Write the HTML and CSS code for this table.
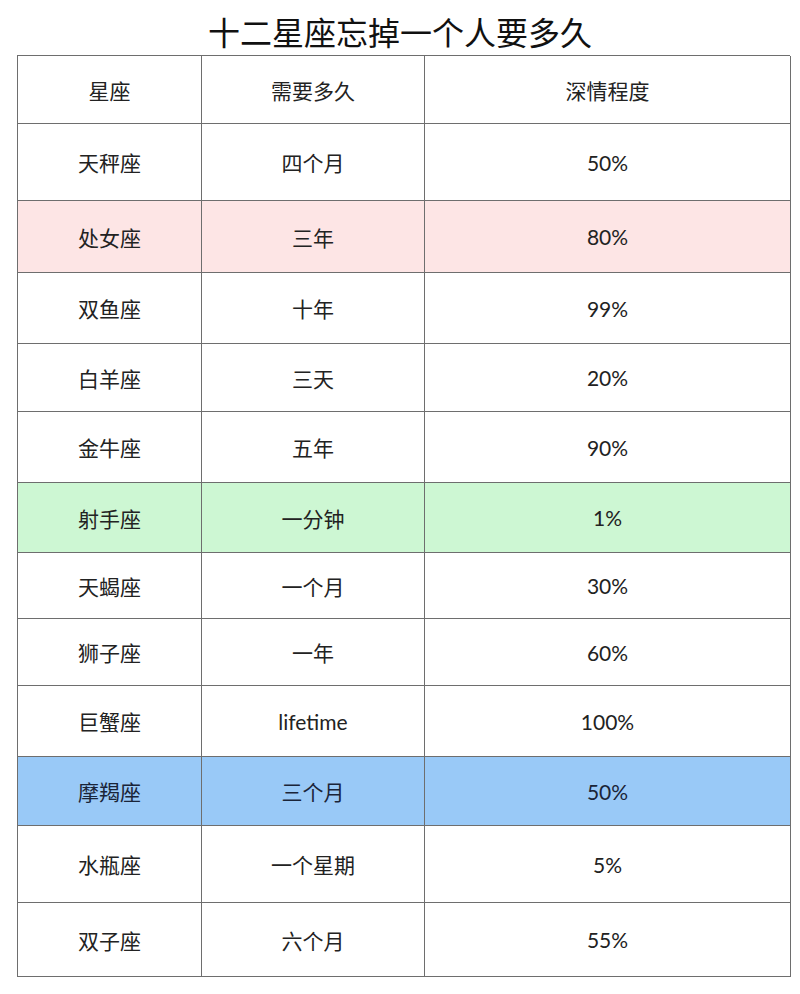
FILE: index.html
```html
<!DOCTYPE html>
<html lang="zh">
<head>
<meta charset="utf-8">
<link rel="stylesheet" href="styles.css">
</head>
<body>
<h1 class="title">十二星座忘掉一个人要多久</h1>
<div class="table">
  <div class="cell">星座</div><div class="cell">需要多久</div><div class="cell">深情程度</div>
  <div class="cell">天秤座</div><div class="cell">四个月</div><div class="cell">50%</div>
  <div class="cell pink">处女座</div><div class="cell pink">三年</div><div class="cell pink">80%</div>
  <div class="cell">双鱼座</div><div class="cell">十年</div><div class="cell">99%</div>
  <div class="cell">白羊座</div><div class="cell">三天</div><div class="cell">20%</div>
  <div class="cell">金牛座</div><div class="cell">五年</div><div class="cell">90%</div>
  <div class="cell green">射手座</div><div class="cell green">一分钟</div><div class="cell green">1%</div>
  <div class="cell">天蝎座</div><div class="cell">一个月</div><div class="cell">30%</div>
  <div class="cell">狮子座</div><div class="cell">一年</div><div class="cell">60%</div>
  <div class="cell">巨蟹座</div><div class="cell">lifetime</div><div class="cell">100%</div>
  <div class="cell blue">摩羯座</div><div class="cell blue">三个月</div><div class="cell blue">50%</div>
  <div class="cell">水瓶座</div><div class="cell">一个星期</div><div class="cell">5%</div>
  <div class="cell">双子座</div><div class="cell">六个月</div><div class="cell">55%</div>
</div>
</body>
</html>
```
FILE: styles.css
```css
* { box-sizing: border-box; }
body {
  margin: 0;
  background: #fff;
  font-family: "Lato", "Noto Sans CJK SC", sans-serif;
  color: #222;
}
.title {
  margin: 0;
  height: 55px;
  display: flex;
  align-items: center;
  justify-content: center;
  padding-top: 6px;
  font-family: "Noto Sans CJK SC", sans-serif;
  font-weight: 400;
  font-size: 32px;
  line-height: 1;
  color: #111;
}
.table {
  margin-left: 17px;
  width: 773px;
  display: grid;
  grid-template-columns: 184px 223px 366px;
  grid-template-rows: 68px 77px 72px 71px 68px 71px 70px 66px 67px 71px 69px 77px 74px;
  border-top: 1.5px solid #6e6e6e;
  border-left: 1.5px solid #6e6e6e;
}
.cell {
  display: flex;
  align-items: center;
  justify-content: center;
  border-right: 1.5px solid #6e6e6e;
  border-bottom: 1.5px solid #6e6e6e;
  font-size: 21px;
}
.pink { background: #fde5e5; }
.green { background: #cdf7d3; }
.blue { background: #99c9f7; color: #1a2438; }
```
